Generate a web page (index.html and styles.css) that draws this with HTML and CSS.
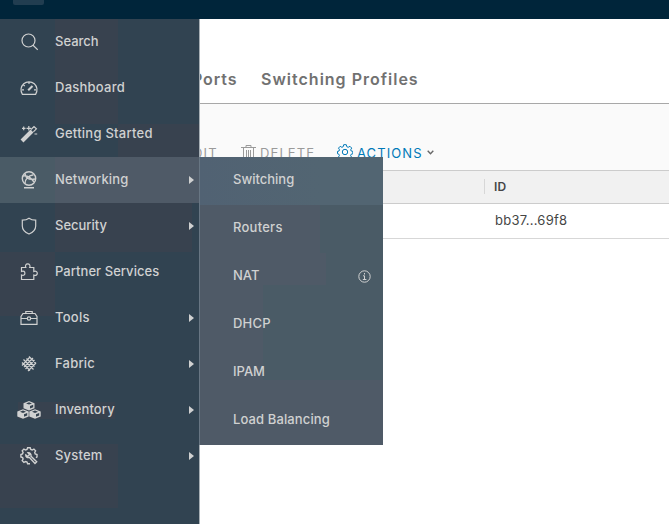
FILE: index.html
```html
<!DOCTYPE html>
<html lang="en">
<head>
<meta charset="utf-8">
<title>Switching</title>
<link rel="stylesheet" href="styles.css">
</head>
<body>
<header class="topbar"><span class="logo"></span></header>
<main class="content">
  <nav class="tabs"><a class="ports">Ports</a><a class="profiles">Switching Profiles</a></nav>
  <div class="toolbar">
    <span class="edit">EDIT</span>
    <span class="delete"><svg width="15" height="17" viewBox="0 0 15 17"><path d="M0 3.500h15M5 3V1.500h5V3M2.500 4v11.500h10V4M5.500 6v8M7.500 6v8M9.500 6v8"/></svg><b>DELETE</b></span>
    <span class="actions"><svg width="16" height="16" viewBox="0 0 16 16"><path d="M6.700.700h2.600l.5 2 1.400.6 1.800-1 1.700 1.800-1 1.700.5 1.200 1.600.4v2.400l-1.700.5-.5 1.300 1 1.600-1.700 1.700-1.800-1-1.300.5-.5 1.400H6.700l-.5-1.500-1.400-.5-1.700 1-1.700-1.700 1-1.600-.5-1.300-1.400-.5V7.400L2 7l.5-1.200-1-1.700 1.700-1.800 1.700 1 1.300-.6Z"/><circle cx="8" cy="8" r="2.700"/></svg><b>ACTIONS</b><svg class="chevron" width="7" height="5" viewBox="0 0 7 5"><path d="M.7.8 3.500 3.700 6.300.8"/></svg></span>
  </div>
  <div class="row head"><span>ID</span></div>
  <div class="row"><span>bb37...69f8</span></div>
</main>
<aside class="sidebar">
  <a class="item"><svg class="icon" viewBox="0 0 18 18"><circle cx="8.500" cy="7.500" r="6.500"/><path d="m13 12.200 4.800 4.600"/></svg><span class="w-search">Search</span></a>
  <a class="item"><svg class="icon" viewBox="0 0 18 18"><path d="M2.400 15.300a8 8 0 1 1 13.200 0ZM9 3v2M3.500 6l1.300 1M2 10.800h2M14 10.800h2"/><path d="m8.200 11.300 4.300-4.300" stroke-width="2"/></svg><span class="w-dash">Dashboard</span></a>
  <a class="item"><svg class="icon" viewBox="0 0 18 18"><path d="M2 16 12 6" stroke-width="4"/><path d="m11 4.500 3-3 2.400 2.300-3 3M2 3.300h3.500M3.700 1.500v3.700M6.500 3.300H11M8.800 1v4.500M14.500 9h2.700"/></svg><span class="w-start">Getting Started</span></a>
  <a class="item on"><svg class="icon bold" viewBox="0 0 18 18"><circle cx="9" cy="7.500" r="6.700"/><path d="M3 5c4-1 8 2 11 6M5 12.500c0-4 3-8 8.500-8.800M5 3c1 5 4 6 10 5M4 16.700h10"/></svg><span class="w-net">Networking</span><i></i></a>
  <a class="item"><svg class="icon" viewBox="0 0 18 18"><path d="M9 1.200c2 1.600 4.300 2 6.700 2V9c0 3.700-2.500 6.200-6.700 8-4.200-1.800-6.700-4.300-6.700-8V3.200c2.400 0 4.700-.4 6.700-2Z"/></svg><span class="w-sec">Security</span><i></i></a>
  <a class="item"><svg class="icon" viewBox="0 0 18 18"><path d="M1.500 4.500h4.300c-1-2 .2-3.600 1.900-3.600s3 1.600 2 3.600h4.100v4c2-.9 3.500.2 3.500 1.800s-1.500 2.700-3.500 1.800v4.400H1.500V12c2.200 1 3.400-.2 3.400-1.800S3.700 7.500 1.500 8.500Z"/></svg><span class="w-part">Partner Services</span></a>
  <a class="item"><svg class="icon" viewBox="0 0 18 18"><path d="M3 4.500h12l2 3v7.800H1V7.500ZM5.800 4.300V2.500h6.400v1.800M1 9.500h6M11 9.500h6"/><circle cx="9" cy="9.500" r="1.700"/></svg><span class="w-tools">Tools</span><i></i></a>
  <a class="item"><svg class="icon" viewBox="0 0 18 18"><path d="m2 7.500 8 8M3.500 4.500l10 10M6.500 3.500l8 8M9 1.500l7 7M2 10.500l8-8.500M4 12l9-9M5.500 14l9-9M8 16l8-8"/></svg><span class="w-fab">Fabric</span><i></i></a>
  <a class="item"><svg class="icon wide" viewBox="0 0 24 18"><g class="cube"><path d="m12 0 5.500 2.200v5L12 9.500 6.500 7.200v-5Z"/><path d="m6 8.300 5.700 2.200v5L6 17.800.3 15.500v-5Z"/><path d="m18 8.300 5.700 2.200v5L18 17.800l-5.700-2.300v-5Z"/></g><path class="top" d="m12 1.200 3 1.200-3 1.200-3-1.200ZM6 9.500l3 1.200-3 1.200-3-1.200ZM18 9.500l3 1.200-3 1.200-3-1.200ZM13 5l3.200-1.300v2.500L13 7.500ZM7 13.200l3.200-1.300v2.500L7 15.700ZM19 13.200l3.200-1.300v2.500L19 15.700Z"/></svg><span class="w-inv">Inventory</span><i></i></a>
  <a class="item"><svg class="icon bold" viewBox="0 0 18 18"><path d="M16 10.800 17 10V7.500l-1.800-.6-.5-1.400.9-1.700-1.700-1.700-1.700.9-1.400-.6L10.200.8H7.600L7 2.500l-1.400.5-1.700-.9-1.700 1.700.9 1.700-.6 1.400-1.600.6V10l1.700.6.5 1.400-.9 1.700 1.700 1.700 1.700-.9 1.400.5.6 1.700H10"/><path d="m9.500 10.500 5.500 6 1.700-1.700-5.700-5.600c.5-2-1-3.800-3-3.500l1.500 2-1.700 1.700-2-1.500c-.3 2 1.500 3.200 3.700 2.600Z"/></svg><span class="w-sys">System</span><i></i></a>
</aside>
<nav class="submenu">
  <a class="on"><span>Switching</span></a>
  <a><span class="s-rt">Routers</span></a>
  <a><span>NAT</span><svg width="13" height="13" viewBox="0 0 13 13"><circle cx="6.500" cy="6.500" r="5.700"/><path d="M6.500 3v1.500M5 5.800h1.500v3.700M4.800 9.500h3.600"/></svg></a>
  <a><span class="s-dh">DHCP</span></a>
  <a><span>IPAM</span></a>
  <a><span class="s-lb">Load Balancing</span></a>
</nav>
</body>
</html>
```
FILE: styles.css
```css
* { box-sizing: border-box; }
body { margin: 0; width: 669px; height: 524px; overflow: hidden; position: relative; background: #fff; font: 500 13px/20px Inter, "Liberation Sans", sans-serif; }
svg { fill: none; stroke: currentColor; flex: none; }
.topbar { height: 19px; background: #00253a; padding-left: 13px; }
.logo { display: block; width: 31px; height: 5px; background: #213d50; border-radius: 0 0 2px 2px; }
.tabs { height: 85px; border-bottom: 1px solid #a8a8a8; padding: 50px 0 0 192px; display: flex; font-size: 16px; font-weight: 600; color: #717171; white-space: nowrap; }
.tabs a { flex: none; }
.ports { width: 69px; letter-spacing: .9px; }
.profiles { letter-spacing: 1px; }
.toolbar { height: 67px; background: #fafafa; border-bottom: 1px solid #ccc; padding: 38px 0 0 184px; display: flex; font-weight: 400; color: #9a9a9a; }
.toolbar span { display: flex; align-items: center; flex: none; height: 20px; }
.toolbar b { font-weight: 400; padding-top: 1px; }
.toolbar .edit { width: 57px; letter-spacing: 1.2px; padding-top: 1px; }
.delete { width: 96px; gap: 4px; letter-spacing: 1.1px; }
.actions { color: #0079b8; gap: 4px; letter-spacing: 1.1px; }
.chevron { color: #666; stroke-width: 1.4; margin-top: 1px; }
.row { height: 35px; border-bottom: 1px solid #d7d7d7; padding: 6px 0 0 495px; font-size: 13px; font-weight: 400; letter-spacing: .25px; color: #454545; }
.head { height: 33px; background: #f1f1f1; border-color: #ccc; padding: 8px 0 0 484px; font-size: 12px; font-weight: 600; }
.head span { display: block; height: 15px; line-height: 16px; padding-left: 9px; border-left: 1px solid #d7d7d7; }
.sidebar { position: absolute; left: 0; top: 19px; width: 200px; height: 505px; border-right: 1px solid #a7afb5; color: #d0d1d1;
  background:
    linear-gradient(#38424f, #38424f) 55px 0 / 63px 105px no-repeat,
    linear-gradient(#38424f, #38424f) 118px 105px / 81px 33px no-repeat,
    linear-gradient(#38424f, #38424f) 55px 184px / 137px 49px no-repeat,
    linear-gradient(#38424f, #38424f) 0 233px / 55px 64px no-repeat,
    linear-gradient(#38424f, #38424f) 18px 383px / 97px 17px no-repeat,
    linear-gradient(#38424f, #38424f) 0 425px / 118px 64px no-repeat,
    #314351; }
.item { display: flex; align-items: center; height: 46px; padding: 0 5px 0 20px; }
.item span { margin-bottom: 2px; }
.item.on { background: linear-gradient(90deg, #4a5b66 55px, #4f5a67 55px); }
.icon { width: 18px; height: 18px; margin: 0 17px 0 0; stroke-width: 1.2; }
.bold { stroke-width: 1.4; }
.wide { width: 24px; margin: 0 14px 0 -3px; }
.cube { fill: currentColor; stroke: none; }
.top { fill: #35424f; stroke: none; }
.item i { margin-left: auto; border: solid transparent; border-width: 4px 0 4px 5px; border-left-color: #d0d1d1; }
.w-dash, .w-start, .w-tools, .s-rt { letter-spacing: .25px; }
.w-net, .w-inv, .s-lb { letter-spacing: .12px; }
.w-part { letter-spacing: .05px; }
.w-fab, .w-sys, .s-dh { letter-spacing: .2px; }
.submenu { position: absolute; left: 199px; top: 157px; width: 184px; border-left: 1px solid #687683; color: #d0d1d1;
  background:
    linear-gradient(#4f5a67, #4f5a67) 0 0 / 120px 96px no-repeat,
    linear-gradient(#4f5a67, #4f5a67) 0 96px / 126px 32px no-repeat,
    linear-gradient(#4f5a67, #4f5a67) 0 128px / 63px 95px no-repeat,
    linear-gradient(#4f5a67, #4f5a67) 0 223px / 183px 65px no-repeat,
    #4a5b66; }
.submenu a { display: flex; align-items: center; height: 48px; padding: 0 12px 4px 33px; }
.submenu .on { background: linear-gradient(90deg, #516273 0, #526572 120px); }
.submenu svg { margin: 2px 0 0 auto; }
```
